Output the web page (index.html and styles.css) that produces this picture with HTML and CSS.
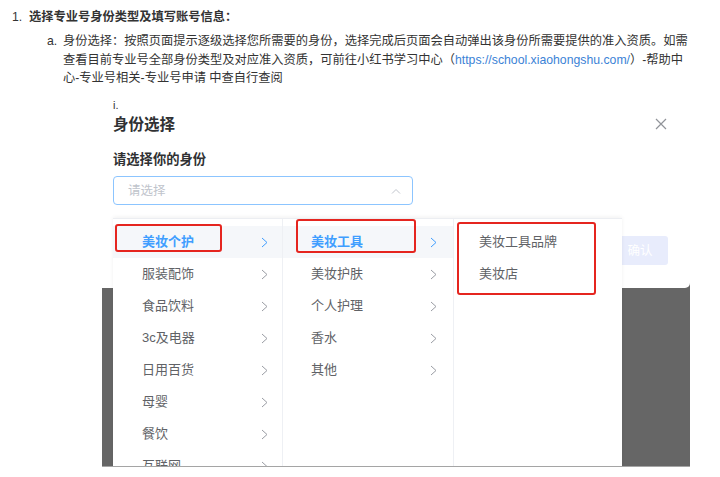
FILE: index.html
```html
<!DOCTYPE html>
<html lang="zh-CN">
<head>
<meta charset="utf-8">
<title>选择专业号身份类型</title>
<link rel="stylesheet" href="styles.css">
</head>
<body>
<div class="doc">
  <div class="li1"><span class="num">1.</span><span class="heading">选择专业号身份类型及填写账号信息：</span></div>
  <div class="lia">
    <span class="num-a">a.</span>
    <p class="para">身份选择：按照页面提示逐级选择您所需要的身份，选择完成后页面会自动弹出该身份所需要提供的准入资质。如需<br>查看目前专业号全部身份类型及对应准入资质，可前往小红书学习中心（<span class="link">https://school.xiaohongshu.com/</span>）-帮助中<br>心-专业号相关-专业号申请 中查自行查阅</p>
  </div>
  <div class="lii">
    <span class="num-i">i.</span>
    <div class="shot">
      <div class="modal">
        <div class="mhead">
          <span class="mtitle">身份选择</span>
          <svg class="close" width="12" height="12" viewBox="0 0 12 12"><path d="M1 1L11 11M11 1L1 11" stroke="#909399" stroke-width="1.2" fill="none"/></svg>
        </div>
        <div class="mlabel">请选择你的身份</div>
        <div class="select">
          <span class="ph">请选择</span>
          <svg class="up" width="10" height="6" viewBox="0 0 10 6"><path d="M1 5.5L5 1.5L9 5.5" stroke="#c0c4cc" stroke-width="1" fill="none"/></svg>
        </div>
        <div class="mfoot"><span class="btn">确认</span></div>
      </div>
      <div class="cascader">
        <ul class="col col1">
          <li class="opt active"><span>美妆个护</span><svg class="chev" width="7" height="11" viewBox="0 0 7 11"><path d="M1 1L6 5.5L1 10" fill="none" stroke-width="1"/></svg></li>
          <li class="opt"><span>服装配饰</span><svg class="chev" width="7" height="11" viewBox="0 0 7 11"><path d="M1 1L6 5.5L1 10" fill="none" stroke-width="1"/></svg></li>
          <li class="opt"><span>食品饮料</span><svg class="chev" width="7" height="11" viewBox="0 0 7 11"><path d="M1 1L6 5.5L1 10" fill="none" stroke-width="1"/></svg></li>
          <li class="opt"><span>3c及电器</span><svg class="chev" width="7" height="11" viewBox="0 0 7 11"><path d="M1 1L6 5.5L1 10" fill="none" stroke-width="1"/></svg></li>
          <li class="opt"><span>日用百货</span><svg class="chev" width="7" height="11" viewBox="0 0 7 11"><path d="M1 1L6 5.5L1 10" fill="none" stroke-width="1"/></svg></li>
          <li class="opt"><span>母婴</span><svg class="chev" width="7" height="11" viewBox="0 0 7 11"><path d="M1 1L6 5.5L1 10" fill="none" stroke-width="1"/></svg></li>
          <li class="opt"><span>餐饮</span><svg class="chev" width="7" height="11" viewBox="0 0 7 11"><path d="M1 1L6 5.5L1 10" fill="none" stroke-width="1"/></svg></li>
          <li class="opt"><span>互联网</span><svg class="chev" width="7" height="11" viewBox="0 0 7 11"><path d="M1 1L6 5.5L1 10" fill="none" stroke-width="1"/></svg></li>
        </ul>
        <ul class="col col2">
          <li class="opt active"><span>美妆工具</span><svg class="chev" width="7" height="11" viewBox="0 0 7 11"><path d="M1 1L6 5.5L1 10" fill="none" stroke-width="1"/></svg></li>
          <li class="opt"><span>美妆护肤</span><svg class="chev" width="7" height="11" viewBox="0 0 7 11"><path d="M1 1L6 5.5L1 10" fill="none" stroke-width="1"/></svg></li>
          <li class="opt"><span>个人护理</span><svg class="chev" width="7" height="11" viewBox="0 0 7 11"><path d="M1 1L6 5.5L1 10" fill="none" stroke-width="1"/></svg></li>
          <li class="opt"><span>香水</span><svg class="chev" width="7" height="11" viewBox="0 0 7 11"><path d="M1 1L6 5.5L1 10" fill="none" stroke-width="1"/></svg></li>
          <li class="opt"><span>其他</span><svg class="chev" width="7" height="11" viewBox="0 0 7 11"><path d="M1 1L6 5.5L1 10" fill="none" stroke-width="1"/></svg></li>
        </ul>
        <ul class="col col3">
          <li class="opt"><span>美妆工具品牌</span></li>
          <li class="opt"><span>美妆店</span></li>
        </ul>
      </div>
      <span class="mark mark1"></span>
      <span class="mark mark2"></span>
      <span class="mark mark3"></span>
    </div>
  </div>
</div>
</body>
</html>
```
FILE: styles.css
```css
* { box-sizing: border-box; }
html, body { margin: 0; padding: 0; background: #fff; }
body {
  font-family: "Liberation Sans", "Noto Sans CJK SC", sans-serif;
  color: #333;
  font-size: 12.25px;
  line-height: 18.3px;
}
.doc { padding-top: 8px; }
.li1 { display: flex; padding-left: 12px; white-space: nowrap; }
.num { width: 17px; }
.heading { font-weight: bold; }
.lia { display: flex; padding-left: 47px; margin-top: 6px; white-space: nowrap; }
.num-a { width: 16px; }
.para { margin: 0; }
.link { color: #3b82d6; }
.lii { position: relative; margin-top: 10px; padding-left: 102px; }
.num-i { position: absolute; left: 113px; top: 1px; font-size: 11px; line-height: 14px; z-index: 3; }
.shot {
  position: relative;
  width: 588px;
  height: 370px;
  background: #666;
  overflow: hidden;
}
.shot::after {
  content: "";
  position: absolute;
  left: 0; right: -30px; bottom: 0;
  height: 1px;
  background: #a5a5a5;
  z-index: 5;
}
.modal {
  height: 191px;
  background: #fff;
  border-bottom-right-radius: 5px;
  padding: 17px 23px 0 11px;
}
.mhead { display: flex; justify-content: space-between; align-items: center; height: 22px; }
.mtitle { font-size: 15.5px; font-weight: bold; color: #303133; line-height: 22px; }
.close { margin-top: -3px; }
.mlabel { margin-top: 15px; font-size: 13.3px; font-weight: bold; color: #303133; line-height: 18px; }
.select {
  margin-top: 7px;
  width: 300px;
  height: 29px;
  border: 1px solid #8cc5ff;
  border-radius: 4px;
  display: flex;
  align-items: center;
  justify-content: space-between;
  padding: 0 11px 0 14px;
}
.ph { color: #c0c4cc; font-size: 12.5px; }
.mfoot { display: flex; justify-content: flex-end; margin-top: 31px; }
.btn {
  width: 56px;
  height: 29px;
  background: #e8ecfc;
  color: #fff;
  border-radius: 3px;
  display: flex;
  align-items: center;
  justify-content: center;
  font-size: 12.5px;
  margin-right: -1px;
}
.cascader {
  position: absolute;
  left: 11px;
  top: 121px;
  width: 509px;
  height: 260px;
  background: #fff;
  border-top: 1px solid #eceef2;
  box-shadow: 0 -1px 4px rgba(0,0,0,0.06);
  display: flex;
  z-index: 2;
}
.col { list-style: none; margin: 0; padding: 7px 0 0; height: 100%; }
.col1 { width: 170px; border-right: 1px solid #eef0f4; }
.col2 { width: 171px; border-right: 1px solid #eef0f4; }
.col3 { width: 168px; }
.opt {
  height: 32px;
  display: flex;
  align-items: center;
  justify-content: space-between;
  font-size: 13px;
  color: #606266;
}
.col1 .opt { padding: 0 14px 0 29px; }
.col2 .opt { padding: 0 16px 0 28px; }
.col3 .opt { padding: 0 16px 0 25px; }
.opt.active { background: #f5f7fa; color: #409eff; font-weight: bold; }
.chev path { stroke: #9a9da4; }
.opt.active .chev path { stroke: #409eff; }
.mark {
  position: absolute;
  border: 2px solid #e5251f;
  border-radius: 3px;
  z-index: 4;
}
.mark1 { left: 13px; top: 127px; width: 107px; height: 28px; }
.mark2 { left: 194px; top: 122px; width: 120px; height: 34px; }
.mark3 { left: 355px; top: 125px; width: 139px; height: 73px; }
```
